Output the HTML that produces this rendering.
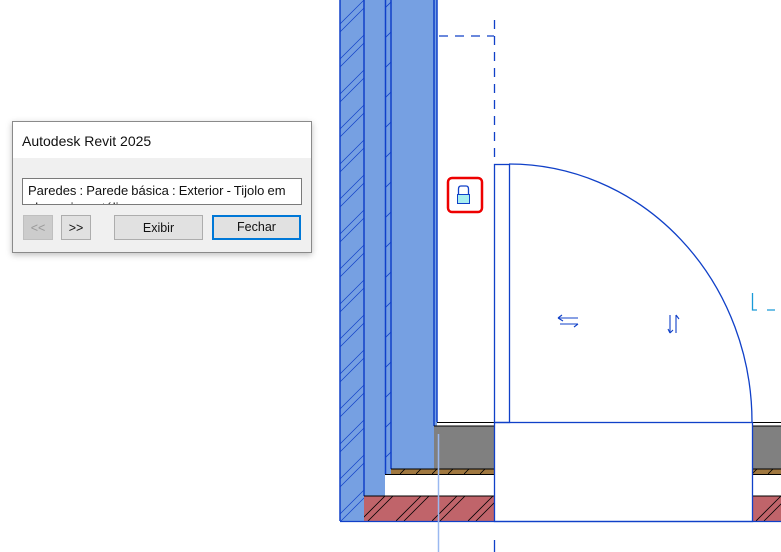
<!DOCTYPE html>
<html><head><meta charset="utf-8"><style>
html,body{margin:0;padding:0;width:781px;height:552px;overflow:hidden;background:#fff;font-family:"Liberation Sans",sans-serif}
svg{position:absolute;left:0;top:0}
.dlg{position:absolute;left:12px;top:121px;width:298px;height:130px;background:#f0f0f0;border:1px solid #8a8a8a;box-shadow:0 2px 6px rgba(0,0,0,.25)}
.title{height:36px;background:#fff;font-size:14px;color:#111;line-height:38px;padding-left:9px}
.box{position:absolute;left:9px;top:56px;height:27px;border:1px solid #7a7a7a;background:#fff;overflow:hidden;font-size:13px;line-height:17px;padding:3px 0 0 5px;box-sizing:border-box;width:280px;color:#111;word-spacing:-0.5px}
.btn{position:absolute;top:93px;height:25px;border:1px solid #adadad;background:#e1e1e1;font-size:12.5px;text-align:center;line-height:25px;box-sizing:border-box;color:#111}
</style></head><body>
<svg width="781" height="552" viewBox="0 0 781 552">
<defs>
<pattern id="h1" patternUnits="userSpaceOnUse" width="24" height="35" x="340" y="0">
<path d="M0,24 L24,0 M0,32 L24,8" stroke="#1040c8" stroke-width="0.7" fill="none"/>
</pattern>
<pattern id="h2" patternUnits="userSpaceOnUse" width="6" height="30" x="385">
<path d="M0,8 L6,2" stroke="#1040c8" stroke-width="0.8"/>
</pattern>
<pattern id="hr" patternUnits="userSpaceOnUse" width="36" height="25" x="0" y="496">
<path d="M0,25 L25,0 M8,25 L33,0" stroke="#000" stroke-width="0.8"/>
</pattern>
<pattern id="hb" patternUnits="userSpaceOnUse" width="16" height="5" y="469">
<path d="M0,5 L5,0" stroke="#000" stroke-width="0.8"/>
</pattern>
</defs>
<rect x="340" y="0" width="97" height="475" fill="#76a0e2"/>
<rect x="340" y="475" width="24" height="46" fill="#76a0e2"/>
<rect x="364" y="475" width="21" height="21" fill="#76a0e2"/>
<rect x="340" y="0" width="24" height="521" fill="url(#h1)"/>
<rect x="385" y="0" width="6" height="469" fill="url(#h2)"/>
<g stroke="#1040c8" stroke-width="1.5" fill="none">
<line x1="340" y1="0" x2="340" y2="521"/>
<line x1="364" y1="0" x2="364" y2="496"/>
<line x1="385.5" y1="0" x2="385.5" y2="474"/>
<line x1="391" y1="0" x2="391" y2="469"/>
<line x1="434" y1="0" x2="434" y2="426"/>
<line x1="437" y1="0" x2="437" y2="422"/>
</g>
<rect x="434" y="426" width="60" height="43" fill="#808080"/>
<rect x="752" y="426" width="29" height="43" fill="#808080"/>
<rect x="391" y="469" width="103" height="5" fill="#a07840"/>
<rect x="752" y="469" width="29" height="5" fill="#a07840"/>
<rect x="391" y="469" width="103" height="5" fill="url(#hb)"/>
<rect x="752" y="469" width="29" height="5" fill="url(#hb)"/>
<rect x="364" y="496" width="130" height="25" fill="#c0646a"/>
<rect x="752" y="496" width="29" height="25" fill="#c0646a"/>
<rect x="364" y="496" width="130" height="25" fill="url(#hr)"/>
<rect x="752" y="496" width="29" height="25" fill="url(#hr)"/>
<g stroke="#000" stroke-width="1">
<line x1="437" y1="422.5" x2="494" y2="422.5"/><line x1="434" y1="426" x2="494" y2="426"/>
<line x1="391" y1="469" x2="494" y2="469"/><line x1="385" y1="474.5" x2="494" y2="474.5"/>
<line x1="364" y1="496" x2="494" y2="496"/>
<line x1="752" y1="422.5" x2="781" y2="422.5"/><line x1="752" y1="426" x2="781" y2="426"/>
<line x1="752" y1="469" x2="781" y2="469"/><line x1="752" y1="474.5" x2="781" y2="474.5"/>
<line x1="752" y1="496" x2="781" y2="496"/>
</g>
<g stroke="#1040c8" stroke-width="1.3" fill="none">
<rect x="494.5" y="164.5" width="15" height="258"/>
<path d="M509,164 A243,258 0 0 1 752,422"/>
<rect x="494.5" y="422.5" width="258" height="99"/>
<line x1="340" y1="521.5" x2="781" y2="521.5"/>
<line x1="494.5" y1="540" x2="494.5" y2="552"/>
</g>
<g stroke="#1040c8" stroke-width="1.3" stroke-dasharray="9,7" fill="none">
<line x1="494.5" y1="20" x2="494.5" y2="158"/>
<line x1="439" y1="36" x2="494" y2="36"/>
</g>
<line x1="438.5" y1="434" x2="438.5" y2="552" stroke="#9ab8f0" stroke-width="1.5"/>
<path d="M752.5,293 V310 H757 M767,310 H775" stroke="#1a9ad8" stroke-width="1.3" fill="none"/>
<g stroke="#1040c8" stroke-width="1.1" fill="none">
<path d="M558,318 H578 M558,318 l4,-3 M560,324 H578 M578,324 l-4,3 M558,318 l5,3"/>
<path d="M670,315 V333 M670,333 l-2,-4 M676,315 V333 M676,315 l3,4 M670,333 l3,-3"/>
</g>
<rect x="448" y="178" width="34" height="34" rx="4" fill="none" stroke="#ee0000" stroke-width="2.5"/>
<path d="M458.5,194 V189 Q458.5,186 461,186 H466 Q468.5,186 468.5,189 V194" stroke="#1040c8" stroke-width="1.3" fill="none"/>
<rect x="457.5" y="194.5" width="12" height="9" fill="#a8eef0" stroke="#1040c8" stroke-width="1"/>
</svg>
<div class="dlg">
<div class="title">Autodesk Revit 2025</div>
<div class="box">Paredes : Parede básica : Exterior - Tijolo em alvenaria metálica</div>
<div class="btn" style="left:10px;width:30px;color:#999;background:#cccccc;border-color:#bfbfbf">&lt;&lt;</div>
<div class="btn" style="left:48px;width:30px">&gt;&gt;</div>
<div class="btn" style="left:101px;width:89px">Exibir</div>
<div class="btn" style="left:199px;width:89px;border:2px solid #0078d7;line-height:21px">Fechar</div>
</div>
</body></html>
